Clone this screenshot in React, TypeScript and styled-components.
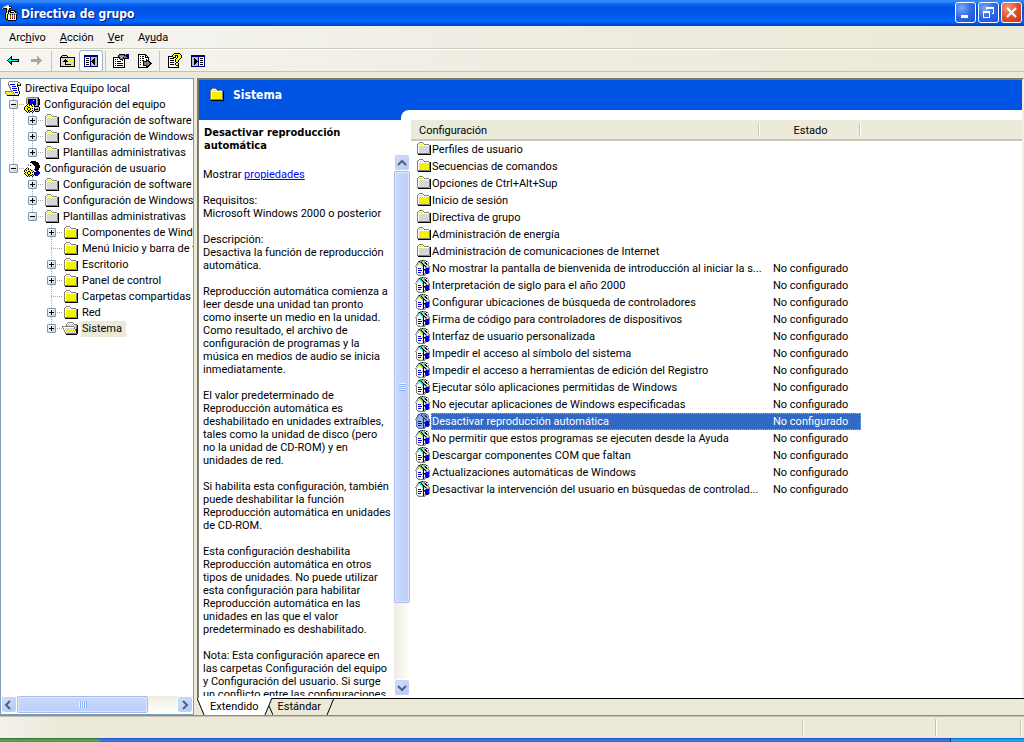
import React from "react";
import styled, { createGlobalStyle, css } from "styled-components";

const font = 'Roboto, "Liberation Sans", sans-serif';
const boldFont = '"DejaVu Sans Condensed", "DejaVu Sans", sans-serif';
const face = "#ece9d8";
const blue = "#0054e3";

const Global = createGlobalStyle`
  * { box-sizing: border-box; }
  html, body { margin: 0; padding: 0; }
  body { font: 11px/13px ${font}; color: #000; background: ${face}; overflow: hidden; }
  button { font: inherit; color: inherit; background: none; border: 0; padding: 0; margin: 0; }
  ul { list-style: none; margin: 0; padding: 0; }
  svg { display: block; flex: none; }
`;

/* ---------- pixel icons ---------- */

const palette: Record<string, string> = {
  K: "#000000",
  g: "#808080",
  s: "#c0c0c0",
  w: "#ffffff",
  y: "#ffff00",
  p: "#cccccc",
  Y: "#a0a000",
  B: "#0000e0",
  N: "#000080",
  c: "#00ffff",
  T: "#008080",
  G: "#00c040",
  a: "#aca899",
  f: "#e8b890",
  r: "#c04020",
  b: "#5070c0",
  l: "#98b4e4",
  m: "#7894d0",
  n: "#183878",
};

const policy = [
  ".....ggKggg.....",
  "...gKGgssgwKg...",
  "..sgcGKssgKwws..",
  "..gsycGKssKKwg..",
  ".gsswycGKswKgs..",
  ".sswwwycKKgwsg..",
  "gswwwwwsKsKgwsg.",
  ".gwwwwwwKwsgsgg.",
  ".gwBBBwsKwgBBBg.",
  ".gwwwwwsKKBBBBg.",
  ".gwBBBBwKgBBBBs.",
  ".gwwwwwwKwBBBBg.",
  ".gwBBBwsKwBBBBg.",
  ".gwwwwwwKggKKg..",
  "..gsswwsKsg.....",
  "...ggggggg......",
];

/* The selected row shows its icon blended with the highlight colour. */
const highlighted: Record<string, string> = { K: "n", g: "b", s: "m", w: "l", y: "l", c: "l", G: "m" };

const icons: Record<string, string[]> = {
  policy,
  policySelected: policy.map((row) => [...row].map((ch) => highlighted[ch] ?? ch).join("")),
  folder: [
    "................",
    "....gggg........",
    "...gwwwwg.......",
    "..gwpypywggggg..",
    "..gwwwwwwwwwwwgK",
    "..gwypypypypypgK",
    "..gwpypypypypygK",
    "..gwypypypypypgK",
    "..gwpypypypypygK",
    "..gwypypypypypgK",
    "..gwpypypypypygK",
    "..gwypypypypypgK",
    "..ggggggggggggsK",
    "...KKKKKKKKKKKKK",
    "................",
    "................",
  ],
  open: [
    "................",
    "......ggggg.....",
    ".....gwwwwwg....",
    "....gwpypypwggg.",
    "....gpypypypypgK",
    "ggggggggggggpygK",
    "gwwwwwwwwwwwgpgK",
    ".gwypypypypygygK",
    ".gwpypypypypygKK",
    "..gwypypypypygKK",
    "..gwpypypypypyKK",
    "...gwypypypypyKK",
    "...ggggggggggggK",
    "....KKKKKKKKKKK.",
    "................",
    "................",
  ],
  scroll: [
    "....ggggggggg...",
    "...gwwwwwwwwwgg.",
    "...gwwwwwwwwgyyg",
    "...gwBBBBBwwKyyK",
    "...ggwwwwwwwKKKK",
    "....gwwBBBBwK...",
    "....ggwwwwwwwK..",
    ".....gwBBBBBwK..",
    ".....gwwwwwwwK..",
    "......gwBBBBwK..",
    "ggggggggwwwwwwK.",
    "gyypyypygwBBBwK.",
    "gypyypyypgwwwwK.",
    ".gyypyypygwwwK..",
    "..KKKKKKKKKKKK..",
    "................",
  ],
  computer: [
    "...gggggggggggg.",
    "..gssssssssssgK.",
    "..gsKKKKKKKKsgKK",
    "..gsKBBBBwBKsgKK",
    "..gsKBBBBBBKsgKK",
    "..gsKBBBBBBKsgKK",
    "..gsKBBBBBBKsgKK",
    "...KyKBKyKBKsgKK",
    "..KyyKyKyyKssgK.",
    ".KyKyyyyKyKKKKK.",
    "KyywKKwyywsssssK",
    "KyyKyyKyKwKssGsK",
    "KywKyyKwyyKKKKgK",
    ".KyyKKyyKyKssssK",
    "..KyKyKKyK.KKKK.",
    "...K.K..K.......",
  ],
  user: [
    ".......NKKKK....",
    "......KKKKKKKK..",
    ".....wwwKKKKKKK.",
    "....gwwwwKKKKKK.",
    "....gwKwwwKKKKKK",
    "....wwwwwwwKKKKK",
    "...gwwwwwwwKKKKK",
    "..KyKwwwwwwKKKK.",
    ".KyyKyKwwwKKKKK.",
    "KyKyyyyKgwwKKK..",
    "KyywKKwyyKwwBBK.",
    ".KyKyyKyKyKBBBBK",
    "KyyKyyKwyyKBBBBK",
    ".KyyKKyyKyKBBBB.",
    "..KyKyKKyK.NNN..",
    "...K.K..K.......",
  ],
  back: [
    "................",
    "................",
    "................",
    "......K.........",
    ".....KK.........",
    "....KcK.........",
    "...KccKKKKKKKK..",
    "..KccccccccccK..",
    "...KTTKKKKKKKK..",
    "....KTK.........",
    ".....KK.........",
    "......K.........",
    "................",
    "................",
    "................",
    "................",
  ],
  forward: [
    "................",
    "................",
    "................",
    "........a.......",
    "........aa......",
    "........aaa.....",
    "..aaaaaaaaaa....",
    "..aaaaaaaaaaa...",
    "..aaaaaaaaaa....",
    "........aaa.....",
    "........aa......",
    "........a.......",
    "................",
    "................",
    "................",
    "................",
  ],
  up: [
    "................",
    "................",
    "...KKKKK........",
    "..KpypypK.......",
    ".KKKKKKKKKKKKKKK",
    ".KypypypypypypyK",
    ".KpypyKypypypypK",
    ".KypyKKKpypypypK",
    ".KpyKKKKKpypypyK",
    ".KypypKpypypypyK",
    ".KpypyKypypypypK",
    ".KypypKKKKKKpypK",
    ".KpypypypypypypK",
    ".KKKKKKKKKKKKKKK",
    "................",
    "................",
  ],
  treePane: [
    "................",
    "................",
    ".NNNNNNNNNNNNNN.",
    ".NNNNNNNNNNNNNN.",
    ".NwwwwwNssssssN.",
    ".NwKKKwNsssKssN.",
    ".NwwwwwNssKKssN.",
    ".NwKKKwNsKKKssN.",
    ".NwwwwwNKKKKssN.",
    ".NwKKKwNsKKKssN.",
    ".NwwwwwNssKKssN.",
    ".NwKKKwNsssKssN.",
    ".NwwwwwNssssssN.",
    ".NNNNNNNNNNNNNN.",
    "................",
    "................",
  ],
  actionPane: [
    "................",
    "................",
    "NNNNNNNNNNNNNN..",
    "NNNNNNNNNNNNNN..",
    "NssssssNwwwwwN..",
    "NssKsssNwKKKwN..",
    "NssKKssNwwwwwN..",
    "NssKKKsNwKKKwN..",
    "NssKKKKNwwwwwN..",
    "NssKKKsNwKKKwN..",
    "NssKKssNwwwwwN..",
    "NssKsssNwKKKwN..",
    "NssssssNwwwwwN..",
    "NNNNNNNNNNNNNN..",
    "................",
    "................",
  ],
  properties: [
    "................",
    "......KKKKKK.NNN",
    ".....KgggggKKKNN",
    ".....KgsgsgggKNN",
    "KKKKKKKgsgKgggNN",
    "KwwwwwKgggKKKKNN",
    "KwKwKwwKKKwK....",
    "KwwwwwwwwKwK....",
    "KwKwKKKKwwwK....",
    "KwwwwwwwwwwK....",
    "KwKwKKKKKKwK....",
    "KwwwwwwwwwwK....",
    "KwKwKKKKKKwK....",
    "KwwwwwwwwwwK....",
    "KKKKKKKKKKKK....",
    "................",
  ],
  exportList: [
    "................",
    ".KKKKKKKK.......",
    ".KwwwwwwKK......",
    ".KwKwKKwKwK.....",
    ".KwwwwwwKKKK....",
    ".KwKwKKwwwwK....",
    ".KwwwwwwwKwK....",
    ".KwKwKKwwKKK....",
    ".KwwwwKKKKgKK...",
    ".KwKwwKgggggKK..",
    ".KwwwwKggggggKK.",
    ".KwKwwKgggggKK..",
    ".KwwwwKKKKgKK...",
    ".KwwwwwwwKKK....",
    ".KKKKKKKKKK.....",
    "................",
  ],
  help: [
    ".......KKKKKK...",
    "......KyyyyyyK..",
    ".....KyyKKKyyyK.",
    ".KKKKKyyK.KyyyK.",
    ".KwwwwKKK.KyyyK.",
    ".KwKKKKwwKyyyK..",
    ".KwwwwwwKyyyK...",
    ".KwKKKKwKyyK....",
    ".KwwwwwwKyyK....",
    ".KwKKKKwwKK.....",
    ".KwwwwwwKyyK....",
    ".KwKKKKwKyyK....",
    ".KwwwwwwwKKK....",
    ".KwwwwwwwwwK....",
    ".KKKKKKKKKKK....",
    "................",
  ],
  app: [
    "....sss.........",
    "..ssswwKK.......",
    ".sswwwwwwK......",
    "sKKKKwwKK.......",
    "....KywK........",
    "....KyK.KKKKK...",
    "....KyKKKwwwKK..",
    "....KyKwKKKKwKK.",
    "...KyyKssssssssK",
    "...KyKssKsKsKsK.",
    "...KyKwwrwrwrwK.",
    "...KyKwwrwrwrwK.",
    "...KyKwwrwrwrwK.",
    "...KyKwwKwKwKwK.",
    "....KKwwwwwwwwK.",
    "......KKKKKKKK..",
  ],
};

function PixelIcon({ name }: { name: string }) {
  const rects: React.ReactNode[] = [];
  icons[name].forEach((row, y) => {
    let x = 0;
    while (x < row.length) {
      const ch = row[x];
      let end = x + 1;
      while (end < row.length && row[end] === ch) end++;
      if (ch !== ".")
        rects.push(<rect key={`${x}-${y}`} x={x} y={y} width={end - x} height={1} fill={palette[ch]} />);
      x = end;
    }
  });
  return (
    <svg width="16" height="16" viewBox="0 0 16 16" shapeRendering="crispEdges" aria-hidden="true">
      {rects}
    </svg>
  );
}

/* ---------- window frame ---------- */

const Window = styled.div`
  display: flex;
  flex-direction: column;
  height: 100vh;
  background: ${face};
  cursor: default;
`;

const TitleBar = styled.header`
  display: flex;
  align-items: center;
  gap: 3px;
  height: 26px;
  flex: none;
  padding: 0 2px 1px 2px;
  background: linear-gradient(#2a7cf0 0, #3a93ff 1px, #1a70f8 3px, #0560f0 5px, #0054e3 8px, #0055e8 14px, #0064fa 19px, #0064fa 22px, #0050dc 24px, #003cc4 26px);
`;

const Title = styled.h1`
  flex: 1;
  margin: 0;
  padding-top: 2px;
  color: #fff;
  font: bold 12px/16px ${boldFont};
  text-shadow: 1px 1px 1px #0a1883;
`;

const WindowButtons = styled.div`
  display: flex;
  gap: 2px;
`;

const WindowButton = styled.button<{ $close?: boolean }>`
  display: grid;
  place-items: center;
  width: 21px;
  height: 21px;
  border: 1px solid #fff;
  border-radius: 3px;
  background: ${(p) =>
    p.$close
      ? "radial-gradient(circle at 30% 25%, #f09a80, #e0502a 50%, #c03410)"
      : "radial-gradient(circle at 30% 25%, #7da6f8, #3068e8 50%, #1a50d8)"};
`;

const MenuBar = styled.nav`
  display: flex;
  align-items: center;
  height: 24px;
  flex: none;
  padding: 0 2px;
  border-bottom: 1px solid #fff;
  box-shadow: inset 0 -1px #d0cdbc;
  background: linear-gradient(90deg, #f6f5f2, #efede2 50%, ${face});
`;

const MenuItem = styled.button`
  padding: 3px 7px;
`;

const ToolBar = styled.div`
  display: flex;
  align-items: center;
  height: 22px;
  flex: none;
  padding-left: 1px;
  border-bottom: 1px solid #c5c2b0;
  background: linear-gradient(90deg, #f6f5f2, #efede2 50%, ${face});
`;

const ToolButton = styled.button<{ $pressed?: boolean }>`
  display: grid;
  place-items: center;
  width: 24px;
  height: 22px;
  border: 1px solid transparent;
  border-radius: 3px;
  ${(p) => p.$pressed && css`
    border-color: #98b5cf;
    background: #fff;
  `}
`;

const ToolSeparator = styled.span`
  width: 1px;
  height: 20px;
  margin: 0 3px 0 2px;
  background: #c8c5b4;
`;

/* ---------- panes ---------- */

const Panes = styled.div`
  display: flex;
  flex: 1;
  min-height: 0;
  gap: 3px;
  padding-top: 6px;
`;

const TreePane = styled.aside`
  display: flex;
  flex-direction: column;
  flex: 0 0 194px;
  min-width: 0;
  padding-bottom: 1px;
  border: 1px solid #7f9db9;
  background: #fff;
`;

const Tree = styled.ul`
  flex: 1;
  min-height: 0;
  padding: 2px 0 0 4px;
  overflow: hidden;
`;

const TreeRow = styled.li`
  display: flex;
  height: 16px;
  white-space: nowrap;
`;

const dots = "#b0aca0 0 1px, transparent 1px 2px";

const Guide = styled.span<{ $down: "full" | "half" | "none"; $across?: boolean }>`
  flex: none;
  width: 19px;
  height: 16px;
  padding: 3px 0 0 4px;
  background-repeat: no-repeat;
  background-image: repeating-linear-gradient(${dots}), repeating-linear-gradient(90deg, ${dots});
  background-position: 8px 0, 8px 7px;
  background-size:
    1px ${(p) => (p.$down === "full" ? "16px" : p.$down === "half" ? "8px" : "0")},
    ${(p) => (p.$across ? "11px 1px" : "0 0")};
`;

const Expander = styled.button`
  display: block;
  width: 9px;
  height: 9px;
  border: 1px solid #7898b5;
  border-radius: 1px;
  background: linear-gradient(135deg, #fff, #d2cfc4);
`;

const TreeLabel = styled.span<{ $selected?: boolean }>`
  margin-left: 3px;
  padding: 1px 4px 2px 1px;
  background: ${(p) => (p.$selected ? face : "none")};
`;

const ScrollTrack = styled.div<{ $vertical?: boolean }>`
  display: flex;
  flex: none;
  flex-direction: ${(p) => (p.$vertical ? "column" : "row")};
  ${(p) => (p.$vertical ? "width: 16px;" : "height: 17px;")}
  background: ${(p) => `linear-gradient(${p.$vertical ? "90deg" : "180deg"}, #eeede5, #fefefb)`};
`;

const ScrollArrow = styled.button`
  display: grid;
  place-items: center;
  flex: none;
  width: 16px;
  height: 17px;
  border: 1px solid #fff;
  border-radius: 3px;
  background: linear-gradient(135deg, #d4e0fc, #b4c8f4);
  box-shadow: inset 0 0 0 1px #c0d0f6;
`;

const ScrollThumb = styled.div<{ $vertical?: boolean }>`
  display: grid;
  place-items: center;
  border: 1px solid #a8bdea;
  border-radius: 2px;
  box-shadow: inset 0 0 0 1px #dce6fd;
  flex: 0 0 ${(p) => (p.$vertical ? "85%" : "82%")};
  background: ${(p) => `linear-gradient(${p.$vertical ? "90deg" : "180deg"}, #cad9fd, #bccffa)`};
`;

const ScrollRoom = styled.div<{ $vertical?: boolean }>`
  display: flex;
  flex: 1;
  min-height: 0;
  min-width: 0;
  flex-direction: ${(p) => (p.$vertical ? "column" : "row")};
`;

const Grip = styled.span<{ $vertical?: boolean }>`
  ${(p) => (p.$vertical ? "width: 7px; height: 8px;" : "width: 8px; height: 7px;")}
  background: ${(p) =>
    `repeating-linear-gradient(${p.$vertical ? "180deg" : "90deg"}, #eef4fe 0 1px, #8cb0f8 1px 2px)`};
`;

const DetailPane = styled.main`
  display: flex;
  flex-direction: column;
  flex: 1;
  min-width: 0;
`;

const DetailFrame = styled.section`
  display: flex;
  flex-direction: column;
  flex: 1;
  min-height: 0;
  border: solid #7c7a6e;
  border-width: 2px 0 0 2px;
  border-right: 2px solid #f1efe2;
  background: #fff;
`;

const Banner = styled.div`
  display: flex;
  align-items: center;
  gap: 9px;
  height: 30px;
  flex: none;
  padding: 0 0 1px 9px;
  background: ${blue};
`;

const BannerTitle = styled.h2`
  margin: 0;
  color: #fff;
  font: bold 12px/16px ${boldFont};
`;

const BannerCurve = styled.div`
  height: 10px;
  flex: none;
  padding-left: 202px;
  background: ${blue};
  &::after {
    content: "";
    display: block;
    height: 100%;
    border-top-left-radius: 8px;
    background: #fff;
  }
`;

const DetailBody = styled.div`
  display: flex;
  flex: 1;
  min-height: 0;
`;

const Description = styled.article`
  display: flex;
  flex-direction: column;
  flex: 0 0 212px;
  min-width: 0;
`;

const DescriptionTitle = styled.h3`
  margin: 0;
  padding: 6px 5px 2px;
  font: bold 11px/13px ${boldFont};
  white-space: pre;
`;

const DescriptionScroll = styled.div`
  display: flex;
  flex: 1;
  min-height: 0;
  padding: 0 1px 2px 0;
`;

const DescriptionText = styled.div`
  flex: 1;
  min-width: 0;
  padding: 14px 0 0 4px;
  overflow: hidden;
  white-space: pre;
  p { margin: 0 0 13px; }
  a { color: #0000ff; }
`;

/* ---------- settings table ---------- */

const Settings = styled.div`
  flex: 1;
  min-width: 0;
  overflow: hidden;
`;

const Table = styled.table`
  width: 100%;
  table-layout: fixed;
  border-collapse: collapse;
  white-space: nowrap;
`;

const HeadCell = styled.th<{ $width?: number; $center?: boolean }>`
  ${(p) => p.$width && `width: ${p.$width}px;`}
  height: 20px;
  padding: ${(p) => (p.$center ? "1px 0 0" : "1px 0 0 8px")};
  border-bottom: 2px solid #cbc7b8;
  font-weight: normal;
  text-align: ${(p) => (p.$center ? "center" : "left")};
  background: ${(p) =>
    p.$width ? `linear-gradient(#c8c5b2, #c8c5b2) right 1px center / 1px 13px no-repeat, linear-gradient(#fff, #fff) right center / 1px 13px no-repeat, #ebeadb` : "#ebeadb"};
`;

const Cell = styled.td`
  height: 17px;
  padding: 0;
`;

const NameCell = styled.div`
  display: flex;
  padding-left: 4px;
`;

const focusLine = "1px dotted #f0a030";

const Name = styled.span<{ $selected?: boolean }>`
  flex: 1;
  height: 17px;
  padding-left: 1px;
  line-height: 17px;
  ${(p) => p.$selected && css`
    color: #fff;
    background: #316ac5;
    border: ${focusLine};
    border-right: 0;
    padding-left: 0;
    line-height: 15px;
  `}
`;

const State = styled.div<{ $selected?: boolean }>`
  height: 17px;
  padding-left: 13px;
  line-height: 17px;
  ${(p) => p.$selected && css`
    color: #fff;
    background: #316ac5;
    border: ${focusLine};
    border-left: 0;
    line-height: 15px;
  `}
`;

/* ---------- tabs and status ---------- */

const Tabs = styled.div`
  display: flex;
  flex: none;
  height: 17px;
  background: linear-gradient(#000, #000) top right / 100% 1px no-repeat, ${face};
`;

const Tab = styled.button<{ $active?: boolean }>`
  height: 17px;
  padding: 0 5px;
  background: ${(p) => (p.$active ? "#fff" : "none")};
`;

const StatusBar = styled.footer`
  display: flex;
  justify-content: flex-end;
  height: 23px;
  flex: none;
  padding: 3px 2px 2px 0;
  border-top: 1px solid #918e80;
  box-shadow: inset 0 1px #c4c1b0;
  background: linear-gradient(90deg, #f2f1ec, ${face} 6%);
`;

const StatusCell = styled.div<{ $width: number }>`
  width: ${(p) => p.$width}px;
  border-right: 1px solid #fff;
  box-shadow: inset -1px 0 #c5c2b2;
`;

const TaskBar = styled.div`
  display: flex;
  justify-content: space-between;
  height: 4px;
  flex: none;
  background: linear-gradient(#1c50b8, #3c80e8 2px, #2862d8);
`;

const StartEdge = styled.div`
  width: 100px;
  border-top-right-radius: 4px;
  background: linear-gradient(#2c6c2c, #58a858 2px, #489848);
`;

const TrayEdge = styled.div`
  width: 74px;
  border-left: 1px solid #103c90;
  background: linear-gradient(#1060c0, #18b0f4 2px, #1090e8);
`;

/* ---------- data ---------- */

type Node = { level: number; icon: string; label: string; box?: "+" | "-"; selected?: boolean };

const nodes: Node[] = [
  { level: 0, icon: "scroll", label: "Directiva Equipo local" },
  { level: 1, icon: "computer", label: "Configuración del equipo", box: "-" },
  { level: 2, icon: "folder", label: "Configuración de software", box: "+" },
  { level: 2, icon: "folder", label: "Configuración de Windows", box: "+" },
  { level: 2, icon: "folder", label: "Plantillas administrativas", box: "+" },
  { level: 1, icon: "user", label: "Configuración de usuario", box: "-" },
  { level: 2, icon: "folder", label: "Configuración de software", box: "+" },
  { level: 2, icon: "folder", label: "Configuración de Windows", box: "+" },
  { level: 2, icon: "folder", label: "Plantillas administrativas", box: "-" },
  { level: 3, icon: "folder", label: "Componentes de Windows", box: "+" },
  { level: 3, icon: "folder", label: "Menú Inicio y barra de tareas" },
  { level: 3, icon: "folder", label: "Escritorio", box: "+" },
  { level: 3, icon: "folder", label: "Panel de control", box: "+" },
  { level: 3, icon: "folder", label: "Carpetas compartidas" },
  { level: 3, icon: "folder", label: "Red", box: "+" },
  { level: 3, icon: "open", label: "Sistema", box: "+", selected: true },
];

/* A level's line continues below a row while a sibling follows before a shallower node. */
function continues(index: number, level: number) {
  for (let i = index + 1; i < nodes.length; i++) {
    if (nodes[i].level < level) return false;
    if (nodes[i].level === level) return true;
  }
  return false;
}

const folders = [
  "Perfiles de usuario",
  "Secuencias de comandos",
  "Opciones de Ctrl+Alt+Sup",
  "Inicio de sesión",
  "Directiva de grupo",
  "Administración de energía",
  "Administración de comunicaciones de Internet",
];

const policies = [
  "No mostrar la pantalla de bienvenida de introducción al iniciar la s...",
  "Interpretación de siglo para el año 2000",
  "Configurar ubicaciones de búsqueda de controladores",
  "Firma de código para controladores de dispositivos",
  "Interfaz de usuario personalizada",
  "Impedir el acceso al símbolo del sistema",
  "Impedir el acceso a herramientas de edición del Registro",
  "Ejecutar sólo aplicaciones permitidas de Windows",
  "No ejecutar aplicaciones de Windows especificadas",
  "Desactivar reproducción automática",
  "No permitir que estos programas se ejecuten desde la Ayuda",
  "Descargar componentes COM que faltan",
  "Actualizaciones automáticas de Windows",
  "Desactivar la intervención del usuario en búsquedas de controlad...",
];

const selectedPolicy = "Desactivar reproducción automática";

const paragraphs = [
  "Requisitos:\nMicrosoft Windows 2000 o posterior",
  "Descripción:\nDesactiva la función de reproducción\nautomática.",
  "Reproducción automática comienza a\nleer desde una unidad tan pronto\ncomo inserte un medio en la unidad.\nComo resultado, el archivo de\nconfiguración de programas y la\nmúsica en medios de audio se inicia\ninmediatamente.",
  "El valor predeterminado de\nReproducción automática es\ndeshabilitado en unidades extraíbles,\ntales como la unidad de disco (pero\nno la unidad de CD-ROM) y en\nunidades de red.",
  "Si habilita esta configuración, también\npuede deshabilitar la función\nReproducción automática en unidades\nde CD-ROM.",
  "Esta configuración deshabilita\nReproducción automática en otros\ntipos de unidades. No puede utilizar\nesta configuración para habilitar\nReproducción automática en las\nunidades en las que el valor\npredeterminado es deshabilitado.",
  "Nota: Esta configuración aparece en\nlas carpetas Configuración del equipo\ny Configuración del usuario. Si surge\nun conflicto entre las configuraciones",
];

const tools: { icon: string; label: string; pressed?: boolean }[][] = [
  [{ icon: "back", label: "Atrás" }, { icon: "forward", label: "Adelante" }],
  [{ icon: "up", label: "Subir un nivel" }, { icon: "treePane", label: "Árbol de consola", pressed: true }],
  [{ icon: "properties", label: "Propiedades" }, { icon: "exportList", label: "Exportar lista" }],
  [{ icon: "help", label: "Ayuda" }, { icon: "actionPane", label: "Panel de acciones" }],
];

const chevrons = {
  left: "M6 1 L2 5 L6 9",
  right: "M3 1 L7 5 L3 9",
  up: "M1 7 L5 3 L9 7",
  down: "M1 3 L5 7 L9 3",
};

function Arrow({ to, label }: { to: keyof typeof chevrons; label: string }) {
  return (
    <ScrollArrow aria-label={label}>
      <svg width="10" height="10" viewBox="0 0 10 10">
        <path d={chevrons[to]} fill="none" stroke="#4d6185" strokeWidth="2" />
      </svg>
    </ScrollArrow>
  );
}

function ScrollBar({ vertical }: { vertical?: boolean }) {
  return (
    <ScrollTrack $vertical={vertical}>
      <Arrow to={vertical ? "up" : "left"} label={vertical ? "Arriba" : "Izquierda"} />
      <ScrollRoom $vertical={vertical}>
        <ScrollThumb $vertical={vertical}>
          <Grip $vertical={vertical} />
        </ScrollThumb>
      </ScrollRoom>
      <Arrow to={vertical ? "down" : "right"} label={vertical ? "Abajo" : "Derecha"} />
    </ScrollTrack>
  );
}

function MenuLabel({ text, at }: { text: string; at: number }) {
  return (
    <MenuItem>
      {text.slice(0, at)}
      <u>{text[at]}</u>
      {text.slice(at + 1)}
    </MenuItem>
  );
}

export default function App() {
  return (
    <Window>
      <Global />
      <TitleBar>
        <PixelIcon name="app" />
        <Title>Directiva de grupo</Title>
        <WindowButtons>
          <WindowButton aria-label="Minimizar">
            <svg width="15" height="15"><path d="M3 10h7v3H3z" fill="#fff" /></svg>
          </WindowButton>
          <WindowButton aria-label="Restaurar">
            <svg width="15" height="15" shapeRendering="crispEdges">
              <path d="M5 2h8v7h-2v-1h1V4H6v1H5zM2 6h7v7H2zM3 8v4h5V8z" fill="#fff" fillRule="evenodd" />
            </svg>
          </WindowButton>
          <WindowButton aria-label="Cerrar" $close>
            <svg width="15" height="15"><path d="M3 3l9 9M12 3l-9 9" stroke="#fff" strokeWidth="2" /></svg>
          </WindowButton>
        </WindowButtons>
      </TitleBar>
      <MenuBar>
        <MenuLabel text="Archivo" at={3} />
        <MenuLabel text="Acción" at={0} />
        <MenuLabel text="Ver" at={0} />
        <MenuLabel text="Ayuda" at={2} />
      </MenuBar>
      <ToolBar>
        {tools.map((group, i) => (
          <React.Fragment key={i}>
            {i > 0 && <ToolSeparator />}
            {group.map((t) => (
              <ToolButton key={t.icon} aria-label={t.label} $pressed={t.pressed}>
                <PixelIcon name={t.icon} />
              </ToolButton>
            ))}
          </React.Fragment>
        ))}
      </ToolBar>
      <Panes>
        <TreePane>
          <Tree>
            {nodes.map((n, i) => (
              <TreeRow key={i}>
                {Array.from({ length: n.level }, (_, k) => {
                  const level = k + 1;
                  const own = level === n.level;
                  const more = continues(i, level);
                  return (
                    <Guide key={k} $down={more ? "full" : own ? "half" : "none"} $across={own}>
                      {own && n.box && (
                        <Expander aria-label={n.box === "+" ? "Expandir" : "Contraer"}>
                          <svg width="7" height="7" shapeRendering="crispEdges">
                            <path d={n.box === "+" ? "M1 3h5v1H1zM3 1h1v5H3z" : "M1 3h5v1H1z"} />
                          </svg>
                        </Expander>
                      )}
                    </Guide>
                  );
                })}
                <PixelIcon name={n.icon} />
                <TreeLabel $selected={n.selected}>{n.label}</TreeLabel>
              </TreeRow>
            ))}
          </Tree>
          <ScrollBar />
        </TreePane>
        <DetailPane>
          <DetailFrame>
            <Banner>
              <PixelIcon name="folder" />
              <BannerTitle>Sistema</BannerTitle>
            </Banner>
            <BannerCurve />
            <DetailBody>
              <Description>
                <DescriptionTitle>{"Desactivar reproducción\nautomática"}</DescriptionTitle>
                <DescriptionScroll>
                  <DescriptionText>
                    <p>Mostrar <a href="#propiedades">propiedades</a></p>
                    {paragraphs.map((p) => <p key={p}>{p}</p>)}
                  </DescriptionText>
                  <ScrollBar vertical />
                </DescriptionScroll>
              </Description>
              <Settings>
                <Table>
                  <thead>
                    <tr>
                      <HeadCell $width={349}>Configuración</HeadCell>
                      <HeadCell $width={101} $center>Estado</HeadCell>
                      <HeadCell />
                    </tr>
                  </thead>
                  <tbody>
                    {folders.map((f) => (
                      <tr key={f}>
                        <Cell><NameCell><PixelIcon name="folder" /><Name>{f}</Name></NameCell></Cell>
                        <Cell />
                        <Cell />
                      </tr>
                    ))}
                    {policies.map((p) => {
                      const selected = p === selectedPolicy;
                      return (
                        <tr key={p} aria-selected={selected}>
                          <Cell>
                            <NameCell>
                              <PixelIcon name={selected ? "policySelected" : "policy"} />
                              <Name $selected={selected}>{p}</Name>
                            </NameCell>
                          </Cell>
                          <Cell><State $selected={selected}>No configurado</State></Cell>
                          <Cell />
                        </tr>
                      );
                    })}
                  </tbody>
                </Table>
              </Settings>
            </DetailBody>
          </DetailFrame>
          <Tabs>
            <svg width="8" height="17"><path d="M0 0h8v17z" fill="#fff" /><path d="M0 0l7 17" stroke="#000" /></svg>
            <Tab $active>Extendido</Tab>
            <svg width="9" height="17">
              <path d="M0 0h8L1 17H0z" fill="#fff" />
              <path d="M8 0L1 17M5 8l4 9" stroke="#000" fill="none" />
            </svg>
            <Tab>Estándar</Tab>
            <svg width="10" height="17"><path d="M8 0L1 17" stroke="#000" /></svg>
          </Tabs>
        </DetailPane>
      </Panes>
      <StatusBar>
        <StatusCell $width={140} />
        <StatusCell $width={133} />
        <StatusCell $width={85} />
      </StatusBar>
      <TaskBar>
        <StartEdge />
        <TrayEdge />
      </TaskBar>
    </Window>
  );
}
